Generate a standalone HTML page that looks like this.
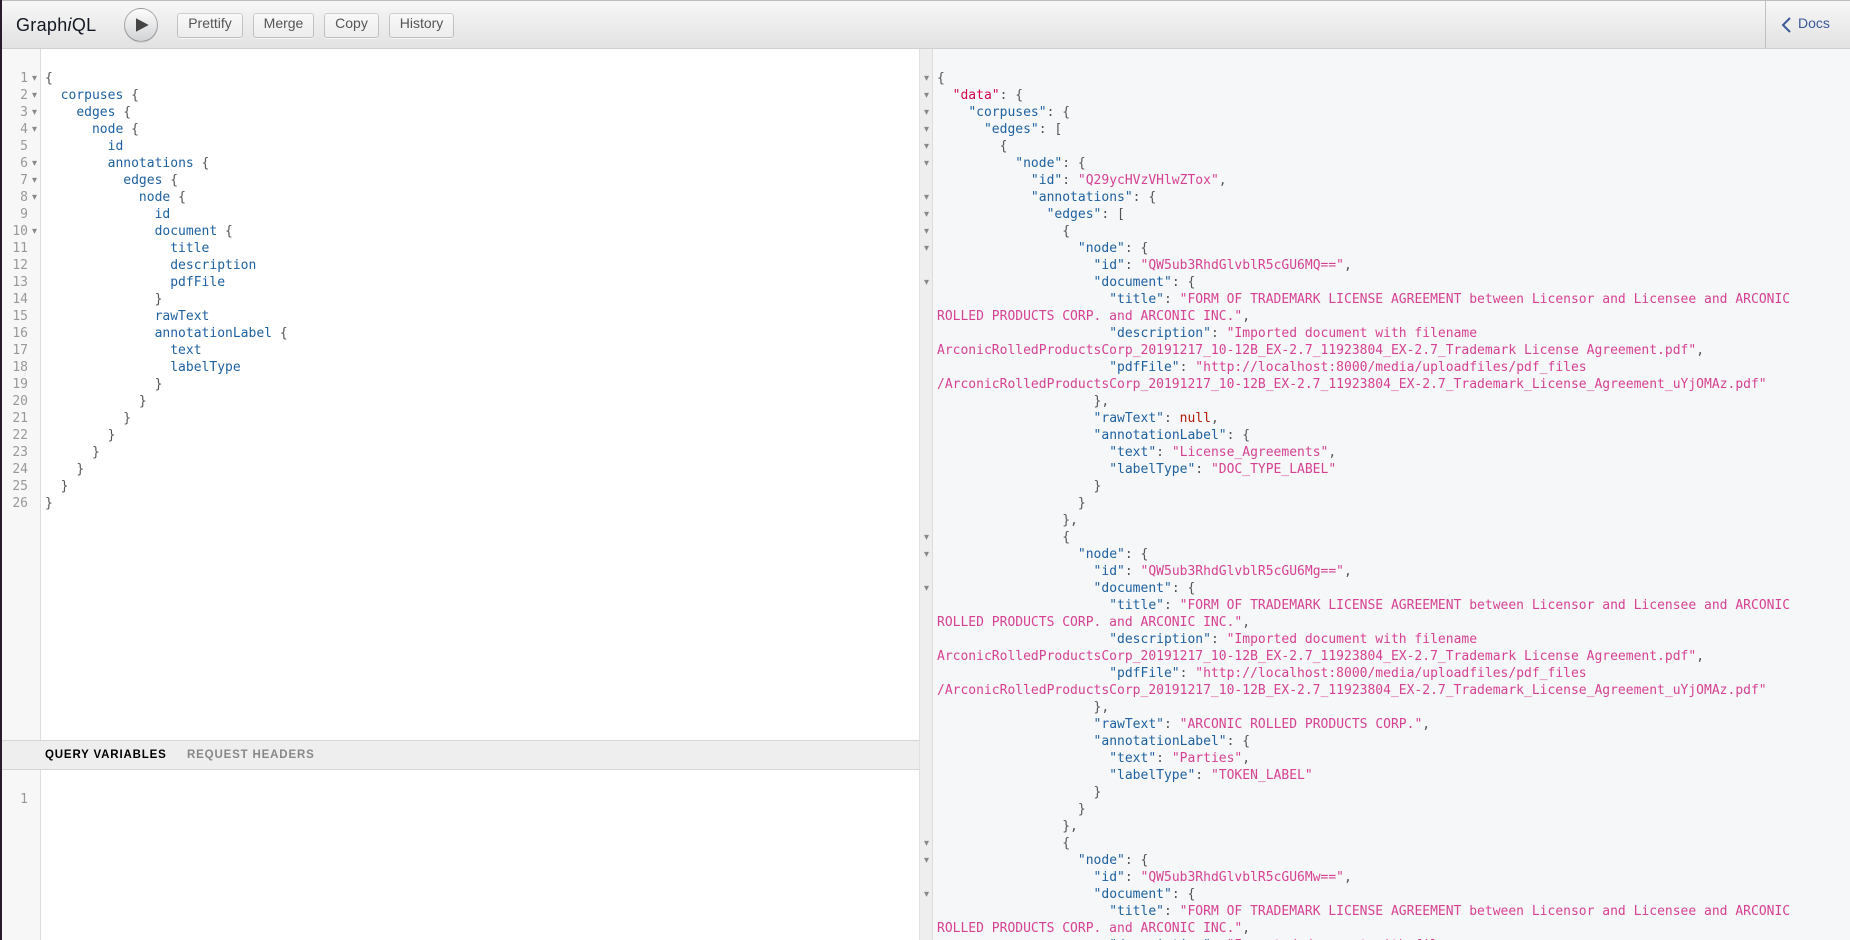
<!DOCTYPE html>
<html><head><meta charset="utf-8"><title>GraphiQL</title>
<style>
html,body{margin:0;padding:0;width:1850px;height:940px;overflow:hidden;background:#fff}
*{box-sizing:border-box}
.abs{position:absolute}
#strip{left:0;top:0;width:2px;height:940px;background:#2a1a2e;z-index:9}
#bar{left:2px;top:0;width:1848px;height:49px;background:linear-gradient(#f7f7f7,#e2e2e2);border-bottom:1px solid #d0d0d0;border-top:1px solid #bdbdbd;font-family:"Liberation Sans",sans-serif}
#title{left:14px;top:14px;font-size:18px;line-height:21px;letter-spacing:.3px;color:#141823}
#title i{font-style:italic}
#run{left:122px;top:7px;width:34px;height:34px;border-radius:17px;background:linear-gradient(#fdfdfd,#d2d3d6);border:1px solid rgba(0,0,0,.3);box-shadow:0 1px 0 rgba(0,0,0,.08)}
.btn{top:12px;height:25px;border-radius:3px;background:linear-gradient(#f9f9f9,#ececec);box-shadow:inset 0 0 0 1px rgba(0,0,0,.2),0 1px 0 rgba(255,255,255,.7),inset 0 1px #fff;color:#555;font-size:14px;line-height:16px;padding:2px 0 0;text-align:center}
#docsep{left:1763px;top:0;width:1px;height:48px;background:#c0c0c0}
#docs{left:1796px;top:14px;font-size:14px;line-height:17px;color:#3b5998}
pre{margin:0;font-family:"DejaVu Sans Mono",monospace;font-size:13px;line-height:17px;white-space:pre}
#lg{left:2px;top:49px;width:39px;height:891px;background:#f7f7f7;border-right:1px solid #ddd}
.ln{color:#999;text-align:right;width:26px;left:2px}
.ar{color:#888;font-size:10px;left:32px;width:10px;font-family:"DejaVu Sans",sans-serif}
.c{color:#555}
.p{color:#1f61a0}
.s{color:#d64292}
.d{color:#d2054e}
.k{color:#b11a04}
#vb{left:2px;top:740px;width:917px;height:30px;background:#eee;border-top:1px solid #d6d6d6;border-bottom:1px solid #d6d6d6;font-family:"Liberation Sans",sans-serif;font-weight:700;font-size:11.5px;letter-spacing:.84px;line-height:28px}
#res{left:919px;top:49px;width:931px;height:891px;background:#f6f7f8;overflow:hidden}
#rg{left:0;top:0;width:14px;height:891px;background:#eee;border-left:1px solid #e0e0e0;border-right:1px solid #ddd}
</style></head><body>
<div class="abs" id="strip"></div>
<div class="abs" id="bar">
<div class="abs" id="title">Graph<i>i</i>QL</div>
<div class="abs" id="run"><svg width="32" height="32" viewBox="1 1 32 32" style="display:block"><path d="M12 10.3L24.7 17L12 23.7Z" fill="#444"/></svg></div>
<div class="abs btn" style="left:175px;width:66px">Prettify</div>
<div class="abs btn" style="left:251px;width:61px">Merge</div>
<div class="abs btn" style="left:322px;width:55px">Copy</div>
<div class="abs btn" style="left:387px;width:65px">History</div>
<div class="abs" id="docsep"></div>
<svg class="abs" style="left:1778px;top:15px" width="12" height="18" viewBox="0 0 12 18"><path d="M10 2L3 9L10 16" fill="none" stroke="#3b5998" stroke-width="2"/></svg>
<div class="abs" id="docs">Docs</div>
</div>
<div class="abs" id="lg"></div>
<pre class="abs ln" style="top:70px">1
2
3
4
5
6
7
8
9
10
11
12
13
14
15
16
17
18
19
20
21
22
23
24
25
26</pre>
<pre class="abs ar" style="top:70px">▾
▾
▾
▾

▾
▾
▾

▾</pre>
<pre class="abs" style="left:45px;top:70px"><span class="c">{</span>
  <span class="p">corpuses</span> <span class="c">{</span>
    <span class="p">edges</span> <span class="c">{</span>
      <span class="p">node</span> <span class="c">{</span>
        <span class="p">id</span>
        <span class="p">annotations</span> <span class="c">{</span>
          <span class="p">edges</span> <span class="c">{</span>
            <span class="p">node</span> <span class="c">{</span>
              <span class="p">id</span>
              <span class="p">document</span> <span class="c">{</span>
                <span class="p">title</span>
                <span class="p">description</span>
                <span class="p">pdfFile</span>
              <span class="c">}</span>
              <span class="p">rawText</span>
              <span class="p">annotationLabel</span> <span class="c">{</span>
                <span class="p">text</span>
                <span class="p">labelType</span>
              <span class="c">}</span>
            <span class="c">}</span>
          <span class="c">}</span>
        <span class="c">}</span>
      <span class="c">}</span>
    <span class="c">}</span>
  <span class="c">}</span>
<span class="c">}</span></pre>
<div class="abs" id="vb"><span class="abs" style="left:43px;top:0;color:#000">QUERY VARIABLES</span><span class="abs" style="left:185px;top:0;color:#888">REQUEST HEADERS</span></div>
<pre class="abs ln" style="top:791px">1</pre>
<div class="abs" id="res">
<div class="abs" id="rg"></div>
<pre class="abs ar" style="left:5px;top:21px">▾
▾
▾
▾
▾
▾

▾
▾
▾
▾

▾














▾
▾

▾














▾
▾

▾</pre>
<pre class="abs" style="left:18px;top:21px"><span class="c">{</span>
  <span class="d">"data"</span><span class="c">: {</span>
    <span class="p">"corpuses"</span><span class="c">: {</span>
      <span class="p">"edges"</span><span class="c">: [</span>
        <span class="c">{</span>
          <span class="p">"node"</span><span class="c">: {</span>
            <span class="p">"id"</span><span class="c">: </span><span class="s">"Q29ycHVzVHlwZTox"</span><span class="c">,</span>
            <span class="p">"annotations"</span><span class="c">: {</span>
              <span class="p">"edges"</span><span class="c">: [</span>
                <span class="c">{</span>
                  <span class="p">"node"</span><span class="c">: {</span>
                    <span class="p">"id"</span><span class="c">: </span><span class="s">"QW5ub3RhdGlvblR5cGU6MQ=="</span><span class="c">,</span>
                    <span class="p">"document"</span><span class="c">: {</span>
                      <span class="p">"title"</span><span class="c">: </span><span class="s">"FORM OF TRADEMARK LICENSE AGREEMENT between Licensor and Licensee and ARCONIC</span>
<span class="s">ROLLED PRODUCTS CORP. and ARCONIC INC."</span><span class="c">,</span>
                      <span class="p">"description"</span><span class="c">: </span><span class="s">"Imported document with filename</span>
<span class="s">ArconicRolledProductsCorp_20191217_10-12B_EX-2.7_11923804_EX-2.7_Trademark License Agreement.pdf"</span><span class="c">,</span>
                      <span class="p">"pdfFile"</span><span class="c">: </span><span class="s">"http://localhost:8000/media/uploadfiles/pdf_files</span>
<span class="s">/ArconicRolledProductsCorp_20191217_10-12B_EX-2.7_11923804_EX-2.7_Trademark_License_Agreement_uYjOMAz.pdf"</span>
                    <span class="c">},</span>
                    <span class="p">"rawText"</span><span class="c">: </span><span class="k">null</span><span class="c">,</span>
                    <span class="p">"annotationLabel"</span><span class="c">: {</span>
                      <span class="p">"text"</span><span class="c">: </span><span class="s">"License_Agreements"</span><span class="c">,</span>
                      <span class="p">"labelType"</span><span class="c">: </span><span class="s">"DOC_TYPE_LABEL"</span>
                    <span class="c">}</span>
                  <span class="c">}</span>
                <span class="c">},</span>
                <span class="c">{</span>
                  <span class="p">"node"</span><span class="c">: {</span>
                    <span class="p">"id"</span><span class="c">: </span><span class="s">"QW5ub3RhdGlvblR5cGU6Mg=="</span><span class="c">,</span>
                    <span class="p">"document"</span><span class="c">: {</span>
                      <span class="p">"title"</span><span class="c">: </span><span class="s">"FORM OF TRADEMARK LICENSE AGREEMENT between Licensor and Licensee and ARCONIC</span>
<span class="s">ROLLED PRODUCTS CORP. and ARCONIC INC."</span><span class="c">,</span>
                      <span class="p">"description"</span><span class="c">: </span><span class="s">"Imported document with filename</span>
<span class="s">ArconicRolledProductsCorp_20191217_10-12B_EX-2.7_11923804_EX-2.7_Trademark License Agreement.pdf"</span><span class="c">,</span>
                      <span class="p">"pdfFile"</span><span class="c">: </span><span class="s">"http://localhost:8000/media/uploadfiles/pdf_files</span>
<span class="s">/ArconicRolledProductsCorp_20191217_10-12B_EX-2.7_11923804_EX-2.7_Trademark_License_Agreement_uYjOMAz.pdf"</span>
                    <span class="c">},</span>
                    <span class="p">"rawText"</span><span class="c">: </span><span class="s">"ARCONIC ROLLED PRODUCTS CORP."</span><span class="c">,</span>
                    <span class="p">"annotationLabel"</span><span class="c">: {</span>
                      <span class="p">"text"</span><span class="c">: </span><span class="s">"Parties"</span><span class="c">,</span>
                      <span class="p">"labelType"</span><span class="c">: </span><span class="s">"TOKEN_LABEL"</span>
                    <span class="c">}</span>
                  <span class="c">}</span>
                <span class="c">},</span>
                <span class="c">{</span>
                  <span class="p">"node"</span><span class="c">: {</span>
                    <span class="p">"id"</span><span class="c">: </span><span class="s">"QW5ub3RhdGlvblR5cGU6Mw=="</span><span class="c">,</span>
                    <span class="p">"document"</span><span class="c">: {</span>
                      <span class="p">"title"</span><span class="c">: </span><span class="s">"FORM OF TRADEMARK LICENSE AGREEMENT between Licensor and Licensee and ARCONIC</span>
<span class="s">ROLLED PRODUCTS CORP. and ARCONIC INC."</span><span class="c">,</span>
                      <span class="p">"description"</span><span class="c">: </span><span class="s">"Imported document with filename</span></pre>
</div>
</body></html>
